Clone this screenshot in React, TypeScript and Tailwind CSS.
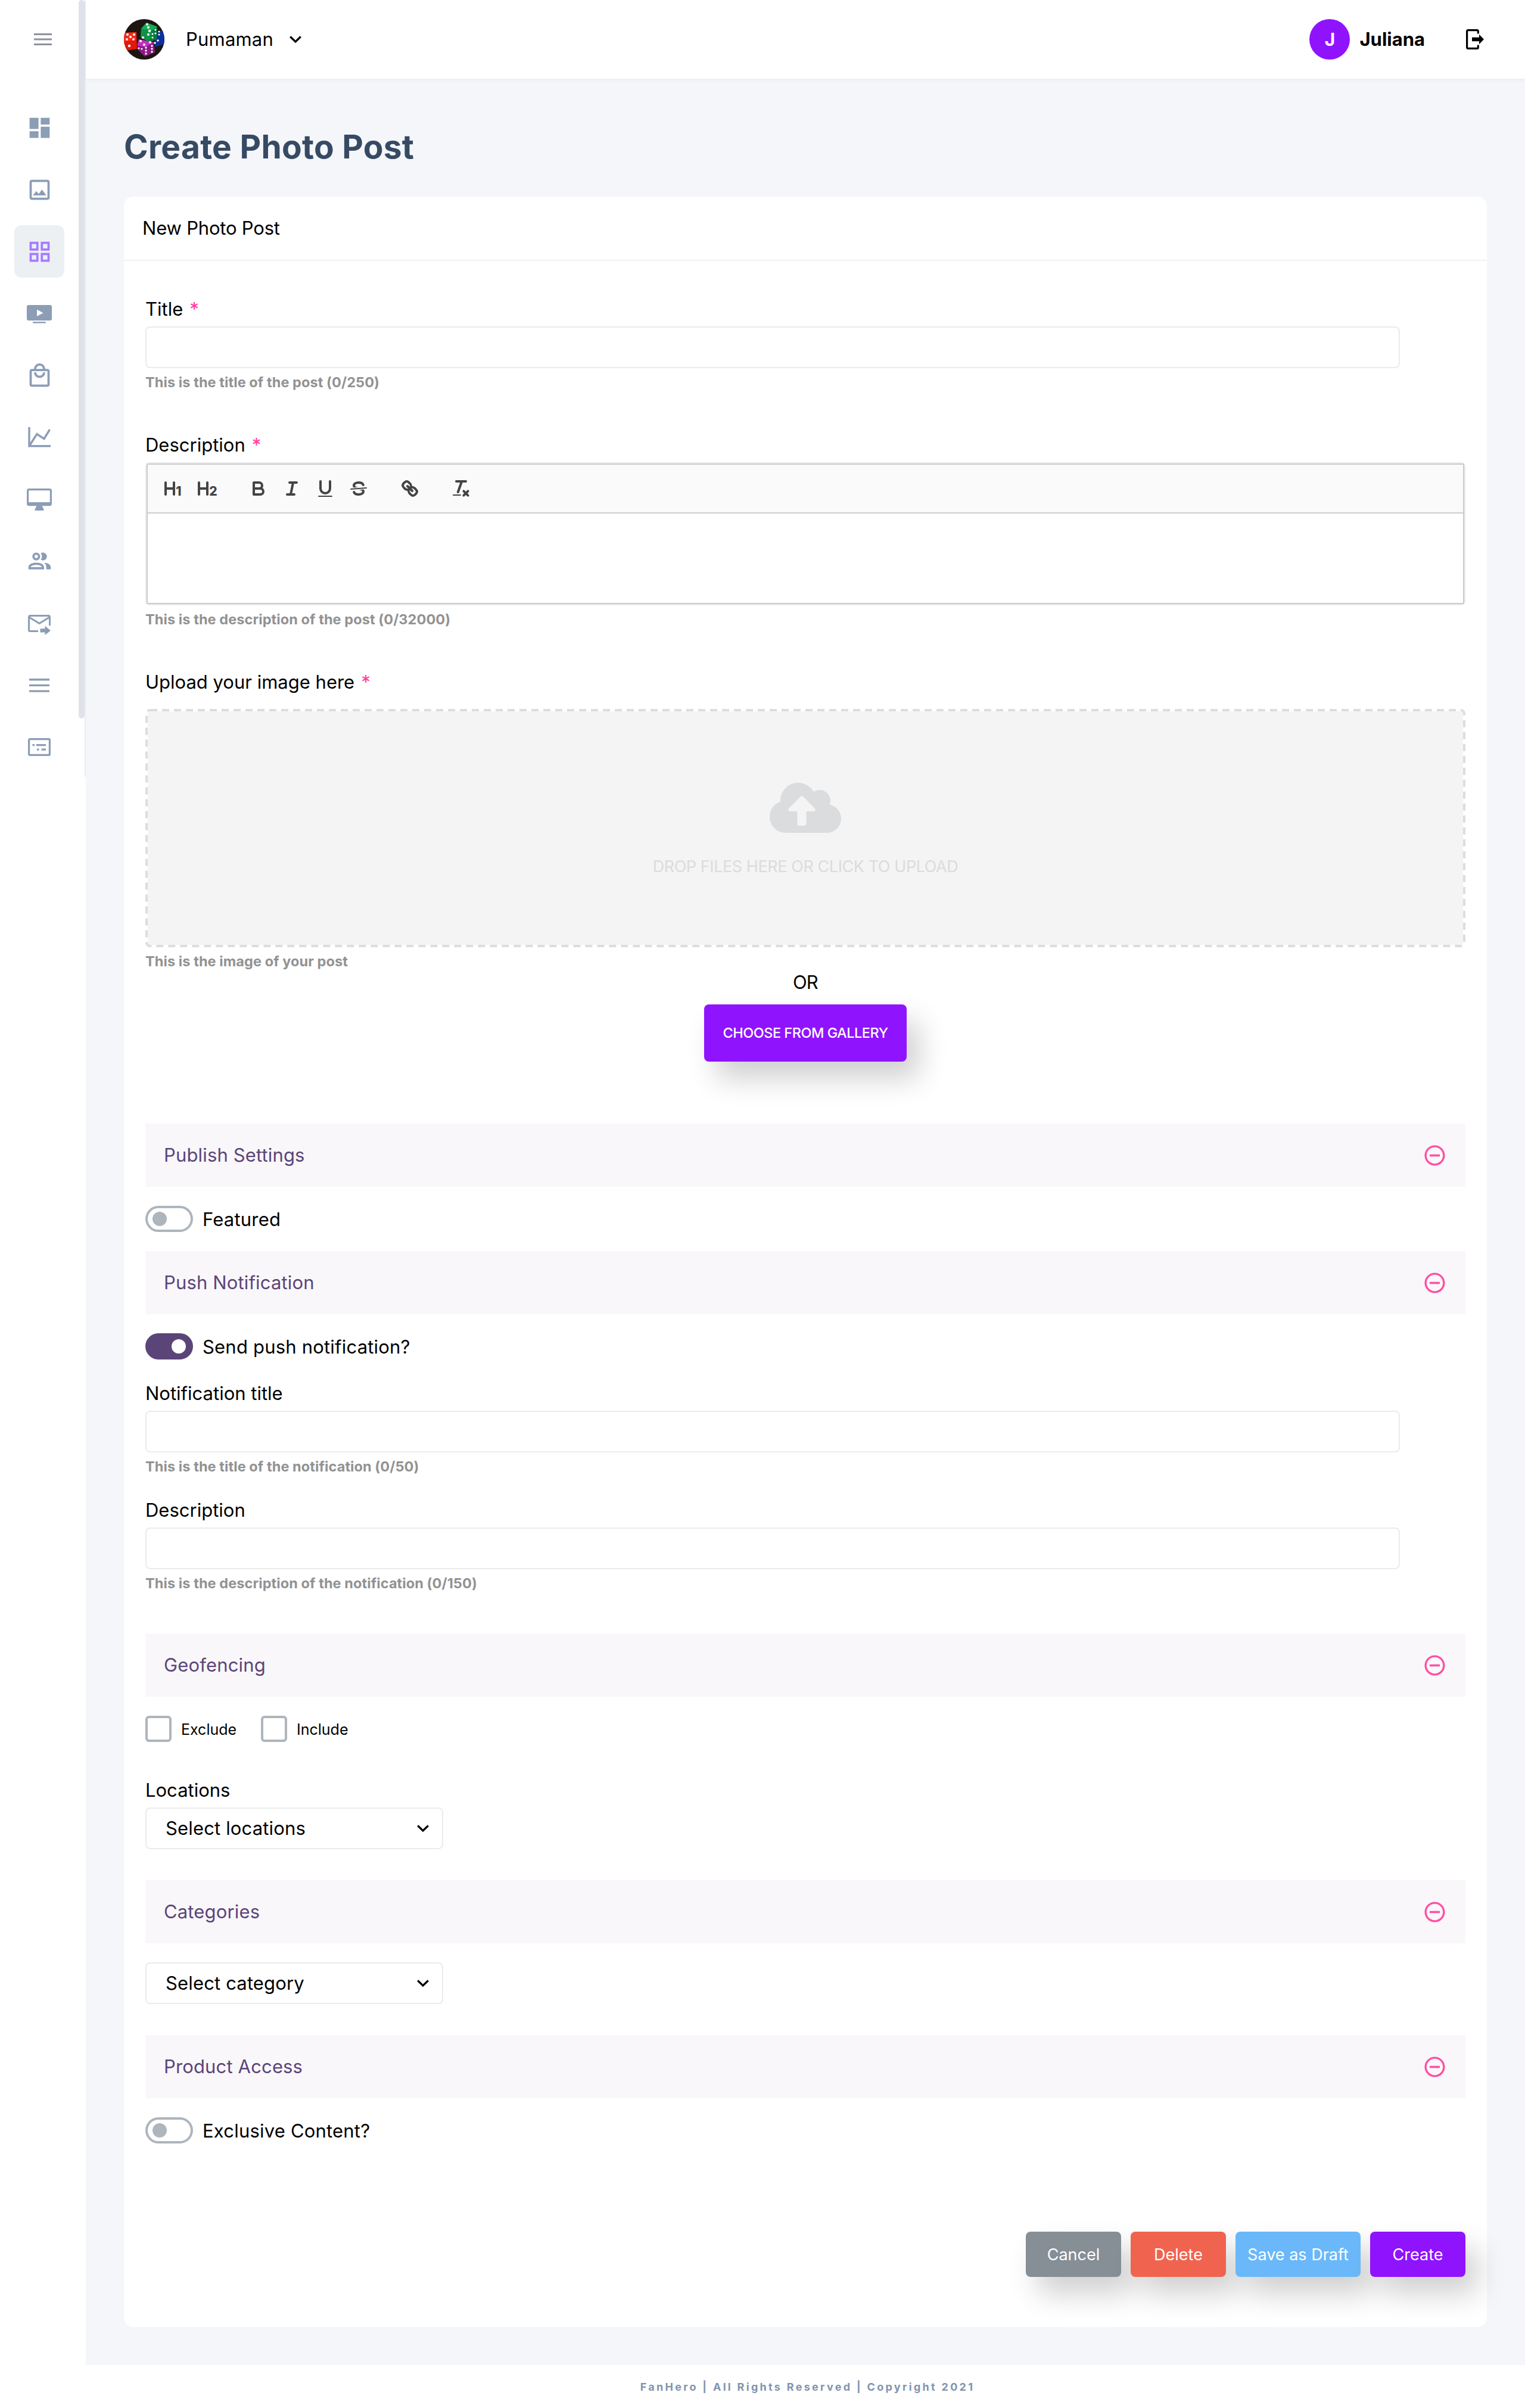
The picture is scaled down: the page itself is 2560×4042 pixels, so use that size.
import React, { useState } from "react";
import {
  MdDashboard,
  MdOutlineGridView,
  MdOutlineImage,
  MdOutlineLocalMall,
  MdRemoveCircleOutline,
} from "react-icons/md";
import { FaCloudUploadAlt } from "react-icons/fa";

const VideoIcon = () => (
  <svg
    width="42"
    height="32"
    viewBox="0 0 42 32"
    fill="currentColor"
    className="mt-[3px]"
  >
    <path d="M3 0h36a3 3 0 0 1 3 3v20a3 3 0 0 1-3 3H3a3 3 0 0 1-3-3V3a3 3 0 0 1 3-3Zm14 7.5v11.5l10.5-5.7Z" />
    <rect x="10" y="28" width="22" height="2.4" rx="1" />
  </svg>
);

const ChartIcon = () => (
  <svg
    width="38"
    height="34"
    viewBox="0 0 38 34"
    fill="none"
    stroke="currentColor"
    strokeWidth="3.4"
  >
    <path d="M2 0V31.8H38" />
    <path d="M2.5 31L15 11.5L27 19.5L36.5 4" />
  </svg>
);

const DesktopIcon = () => (
  <svg width="42" height="37" viewBox="0 0 42 37" fill="currentColor">
    <rect
      x="1.6"
      y="1.6"
      width="38.8"
      height="26"
      rx="2"
      fill="none"
      stroke="currentColor"
      strokeWidth="3.2"
    />
    <path d="M2 23H40V28.5H2ZM17 28H25L28.5 35V37H13.5V35Z" />
  </svg>
);

const PeopleIcon = () => (
  <svg width="45" height="45" viewBox="0 0 24 24" fill="currentColor">
    <path d="M13.07 10.41A5 5 0 0 0 13.07 4.59A3.39 3.39 0 0 1 15 4A3.5 3.5 0 0 1 15 11A3.39 3.39 0 0 1 13.07 10.41M5.5 7.5A3.5 3.5 0 1 1 9 11A3.5 3.5 0 0 1 5.5 7.5M7.5 7.5A1.5 1.5 0 1 0 9 6A1.5 1.5 0 0 0 7.5 7.5M16 17V19H2V17S2 13 9 13 16 17 16 17M14 17C13.86 16.22 12.67 15 9 15S4.07 16.31 4 17M15.95 13A5.32 5.32 0 0 1 18 17V19H22V17S22 13.37 15.94 13Z" />
  </svg>
);

const MailIcon = () => (
  <svg
    width="38"
    height="34"
    viewBox="0 0 38 34"
    fill="none"
    stroke="currentColor"
    strokeWidth="3"
    className="mt-[6px]"
  >
    <path d="M17 27.5H3.5a2 2 0 0 1-2-2V3.5a2 2 0 0 1 2-2h31a2 2 0 0 1 2 2V18" />
    <path d="M2 4L19 14.5L36 4" />
    <path
      d="M20.5 23.3H28.5V18.5L38 26.4L28.5 34V29.5H20.5Z"
      fill="currentColor"
      stroke="none"
    />
  </svg>
);

const MenuIcon = () => (
  <svg width="34" height="23" viewBox="0 0 34 23" fill="currentColor">
    <path d="M0 0H34V3.4H0ZM0 9.7H34V13.1H0ZM0 19.4H34V22.8H0Z" />
  </svg>
);

const ListIcon = () => (
  <svg width="38" height="30" viewBox="0 0 38 30" fill="currentColor">
    <rect
      x="1.6"
      y="1.6"
      width="34.8"
      height="26.8"
      rx="1.5"
      fill="none"
      stroke="currentColor"
      strokeWidth="3.2"
    />
    <path d="M7.5 10H11V13.2H7.5ZM14 10H30V13.2H14ZM15 17.5H18.5V20.7H15ZM22.5 17.5H30V20.7H22.5Z" />
  </svg>
);

const ChevronIcon = () => (
  <svg
    width="20"
    height="13"
    viewBox="0 0 20 13"
    fill="none"
    stroke="black"
    strokeWidth="3.2"
  >
    <path d="M1.2 1.5L10 10L18.8 1.5" />
  </svg>
);

const LogoutIcon = () => (
  <svg width="30" height="34" viewBox="0 0 30 34">
    <path
      d="M20.3 7.5V3.2a1.6 1.6 0 0 0-1.6-1.6H3.2a1.6 1.6 0 0 0-1.6 1.6V30.8a1.6 1.6 0 0 0 1.6 1.6H18.7a1.6 1.6 0 0 0 1.6-1.6V26.5"
      fill="none"
      stroke="black"
      strokeWidth="3.2"
    />
    <path d="M10 13.8H22V8.8L30 17L22 25.2V20.2H10Z" />
  </svg>
);

const DiceAvatar = () => (
  <svg
    width="68"
    height="68"
    viewBox="0 0 68 68"
    className="rounded-full bg-[#1d1610]"
  >
    <path d="M0 23L21 22L22 50L4 53L0 48Z" fill="#e3170a" />
    <path d="M0 23L21 22L20 35L0 38Z" fill="#f52a17" />
    <path d="M53 22L68 18V42L52 47Z" fill="#0d2f9e" />
    <path d="M38 6L56 13L55 34L42 39L28 31L29 16Z" fill="#0c7a3c" />
    <path d="M38 6L56 13L46 20L29 16Z" fill="#16ad58" />
    <path d="M29 16L46 20L43 38L28 31Z" fill="#0f9148" />
    <path d="M25 34L50 39L52 56L35 63L22 50Z" fill="#8a1a86" />
    <path d="M25 34L50 39L36 47L22 44Z" fill="#c32fbd" />
    <g fill="white">
      <circle cx="6" cy="26" r="2" />
      <circle cx="17" cy="26" r="2" />
      <circle cx="11" cy="30" r="2" />
      <circle cx="5" cy="34" r="2" />
      <circle cx="16" cy="34" r="2" />
      <circle cx="9" cy="45" r="2.2" />
      <circle cx="39" cy="9" r="2" />
      <circle cx="41" cy="14" r="2" />
      <circle cx="43" cy="20" r="2.2" />
      <circle cx="41" cy="26" r="2" />
      <circle cx="32" cy="31" r="2" />
      <circle cx="48" cy="25" r="1.6" />
      <circle cx="48" cy="31" r="1.6" />
      <circle cx="53" cy="18" r="1.6" />
      <circle cx="53" cy="24" r="1.6" />
      <circle cx="59" cy="21" r="1.6" />
      <circle cx="59" cy="26" r="1.6" />
      <circle cx="57" cy="36" r="1.8" />
      <circle cx="52" cy="40" r="1.8" />
      <circle cx="28" cy="37" r="2" />
      <circle cx="34" cy="43" r="2" />
      <circle cx="44" cy="39" r="2" />
      <circle cx="25" cy="49" r="1.6" />
      <circle cx="30" cy="50" r="1.6" />
      <circle cx="37" cy="48" r="1.7" />
      <circle cx="37" cy="53" r="1.7" />
      <circle cx="37" cy="58" r="1.7" />
      <circle cx="47" cy="45" r="1.7" />
      <circle cx="47" cy="50" r="1.7" />
      <circle cx="47" cy="55" r="1.7" />
    </g>
  </svg>
);

const navItems = [
  { name: "dashboard", icon: <MdDashboard size={45} /> },
  { name: "banners", icon: <MdOutlineImage size={45} /> },
  { name: "posts", icon: <MdOutlineGridView size={45} /> },
  { name: "videos", icon: <VideoIcon /> },
  { name: "store", icon: <MdOutlineLocalMall size={45} /> },
  { name: "reports", icon: <ChartIcon /> },
  { name: "app", icon: <DesktopIcon /> },
  { name: "users", icon: <PeopleIcon /> },
  { name: "messages", icon: <MailIcon /> },
  { name: "menu", icon: <MenuIcon /> },
  { name: "forms", icon: <ListIcon /> },
];

const Sidebar = () => (
  <aside className="flex w-36 shrink-0 items-start bg-white">
    <div className="w-[132px]">
      <div className="flex h-[132px] items-center justify-center pl-3">
        <svg width="30" height="20" viewBox="0 0 30 20" fill="#8f919d">
          <path d="M0 0H30V3H0ZM0 8.5H30V11.5H0ZM0 17H30V20H0Z" />
        </svg>
      </div>
      <nav className="flex flex-col items-center gap-4 pt-[38px]">
        {navItems.map((item) => (
          <a
            key={item.name}
            className={`flex h-[88px] w-[84px] items-center justify-center rounded-xl ${
              item.name === "posts"
                ? "bg-[#ecf0f3] text-[#a67bff]"
                : "text-[#8c9db6]"
            }`}
          >
            {item.icon}
          </a>
        ))}
      </nav>
    </div>
    <div className="h-[1304px] w-3 border-r-2 border-[#ebedf4]">
      <div className="h-[1206px] w-[10px] rounded-full bg-[#e0e2eb]" />
    </div>
  </aside>
);

const Header = () => (
  <header className="z-10 flex h-[132px] items-center justify-between bg-white pr-[69px] pl-16 shadow-[0_2px_6px_rgba(43,55,72,0.06)]">
    <div className="flex items-center">
      <DiceAvatar />
      <span className="mr-[27px] ml-9 tracking-[0.2px]">Pumaman</span>
      <ChevronIcon />
    </div>
    <div className="flex items-center font-bold">
      <div className="flex size-[68px] items-center justify-center rounded-full bg-[#9013fe] text-[30px] text-white">
        J
      </div>
      <span className="mr-[69px] ml-4">Juliana</span>
      <LogoutIcon />
    </div>
  </header>
);

const Label = ({
  children,
  required,
}: {
  children: React.ReactNode;
  required?: boolean;
}) => (
  <label className="mb-2 flex h-[42px] items-center">
    {children}
    {required && <span className="ml-[11px] text-[#ff3d9a]">*</span>}
  </label>
);

const Hint = ({ children }: { children: React.ReactNode }) => (
  <p className="mt-[10px] h-7 text-[23.5px] leading-7 font-bold tracking-[0.08px] text-[#929292]">
    {children}
  </p>
);

const Input = () => (
  <input
    type="text"
    className="block h-[70px] w-[2106px] rounded-lg border-2 border-[#ebebeb] px-8 outline-none"
  />
);

const Select = ({ placeholder }: { placeholder: string }) => (
  <button className="flex h-[70px] w-[500px] items-center justify-between rounded-lg border-2 border-[#ebebeb] pr-[22px] pl-8 tracking-[0.15px]">
    {placeholder}
    <ChevronIcon />
  </button>
);

const SectionBar = ({ title }: { title: string }) => (
  <div className="flex h-[106px] items-center justify-between bg-[#f9f7fa] pr-[31px] pl-[31px] tracking-[0.15px] text-[#5b4578]">
    {title}
    <MdRemoveCircleOutline size={41} className="text-[#ff4fa3]" />
  </div>
);

const Toggle = ({
  label,
  defaultOn = false,
}: {
  label: string;
  defaultOn?: boolean;
}) => {
  const [on, setOn] = useState(defaultOn);

  return (
    <div
      className="flex h-11 items-center gap-4 tracking-[0.2px]"
      onClick={() => setOn(!on)}
    >
      <div
        className={`flex h-11 w-20 items-center rounded-full border-4 px-2 ${
          on
            ? "justify-end border-[#5b4578] bg-[#5b4578]"
            : "justify-start border-[#adb5bd]"
        }`}
      >
        <div
          className={`size-6 rounded-full ${on ? "bg-white" : "bg-[#adb5bd]"}`}
        />
      </div>
      <span className="pt-0.5">{label}</span>
    </div>
  );
};

const Checkbox = ({ label }: { label: string }) => (
  <label className="flex w-[194px] items-center gap-4 text-[25px]">
    <span className="size-11 rounded-md border-4 border-[#adb5bd]" />
    <span className="pt-0.5">{label}</span>
  </label>
);

const ToolbarButton = ({ children }: { children: React.ReactNode }) => (
  <button className="flex h-12 w-14 items-center justify-center">
    <svg
      width="36"
      height="36"
      viewBox="0 0 18 18"
      fill="none"
      stroke="#444"
      strokeWidth="2"
      strokeLinecap="round"
      strokeLinejoin="round"
    >
      {children}
    </svg>
  </button>
);

const Heading = ({ level }: { level: string }) => (
  <>
    <path d="M2 4V14M9 4V14M2 9H9" />
    <text
      x="10.6"
      y="14.9"
      fill="#444"
      stroke="none"
      className="text-[10.5px] font-extrabold"
    >
      {level}
    </text>
  </>
);

const Editor = () => (
  <div className="h-60 rounded-lg border-2 border-[#ebebeb]">
    <div className="flex h-full flex-col border-2 border-[#ccc]">
      <div className="flex h-[82px] items-center gap-[30px] border-b-2 border-[#ccc] bg-[#fafafa] pl-4">
        <div className="flex">
          <ToolbarButton>
            <Heading level="1" />
          </ToolbarButton>
          <ToolbarButton>
            <Heading level="2" />
          </ToolbarButton>
        </div>
        <div className="flex">
          <ToolbarButton>
            <path d="M5,4H9.5A2.5,2.5,0,0,1,9.5,9H5Z" />
            <path d="M5,9h5.5A2.5,2.5,0,0,1,10.5,14H5Z" />
          </ToolbarButton>
          <ToolbarButton>
            <path d="M7,4H13M5,14H11M8,14L10,4" />
          </ToolbarButton>
          <ToolbarButton>
            <path d="M5,3V9a4,4,0,0,0,8,0V3" />
            <path d="M3.5,15.5H14.5" strokeWidth="1" />
          </ToolbarButton>
          <ToolbarButton>
            <path d="M12.9,6C12.5,4.8,11,4,9,4C6.8,4,5,5,5,6.5C5,8,6.5,8.7,9,9C11.5,9.3,13,10,13,11.5C13,13,11.2,14,9,14C7,14,5.5,13.2,5.1,12" />
            <path d="M2.5,9.5L15.5,8.5" stroke="#fafafa" strokeWidth="2.2" />
            <path d="M2.5,9.5L15.5,8.5" strokeWidth="1" />
          </ToolbarButton>
        </div>
        <ToolbarButton>
          <path d="M7,7L11,11" />
          <path d="M8.9,4.577a3.476,3.476,0,0,1,.36,4.679A3.476,3.476,0,0,1,4.577,8.9C3.185,7.5,2.035,6.4,4.217,4.217S7.5,3.185,8.9,4.577Z" />
          <path d="M13.423,9.1a3.476,3.476,0,0,0-4.679-.36,3.476,3.476,0,0,0,.36,4.679c1.392,1.392,2.5,2.542,4.679.36S14.815,10.5,13.423,9.1Z" />
        </ToolbarButton>
        <ToolbarButton>
          <path d="M5,3H13M6.4,12L9.6,3M11.2,11.2L14.8,14.8M14.8,11.2L11.2,14.8" />
          <path d="M2.5,14.5H8.5" strokeWidth="1" />
        </ToolbarButton>
      </div>
      <div className="grow" />
    </div>
  </div>
);

const Dropzone = () => (
  <div className="relative mt-6 flex h-[400px] flex-col items-center rounded-lg border-4 border-transparent bg-[#f4f4f4] bg-clip-padding pt-[114px] text-[#dadcde]">
    {/* dashed outline, the dashes are longer than border-dashed gives */}
    <svg className="absolute -top-1 -left-1" width="2216" height="400">
      <rect
        x="2"
        y="2"
        width="2212"
        height="396"
        rx="6"
        fill="none"
        stroke="#dddddd"
        strokeWidth="4"
        strokeDasharray="12 8"
      />
    </svg>
    <FaCloudUploadAlt className="h-24 w-[120px]" />
    <span className="mt-[31px] text-[27px] leading-10 tracking-[-0.43px]">
      DROP FILES HERE OR CLICK TO UPLOAD
    </span>
  </div>
);

const buttonShadow = "shadow-[20px_28px_48px_rgba(0,0,0,0.19)]";

const actions = [
  { label: "Cancel", style: "w-40 bg-[#868e96]" },
  { label: "Delete", style: "w-40 bg-[#f0644f]" },
  { label: "Save as Draft", style: "w-[210px] bg-[#6ab8f9]" },
  { label: "Create", style: "w-40 bg-[#9013fe]" },
];

const PhotoPostForm = () => (
  <form className="flex flex-col px-9 pt-[60px] pb-[84px]">
    <Label required>Title</Label>
    <Input />
    <Hint>This is the title of the post (0/250)</Hint>

    <div className="mt-[70px]">
      <Label required>Description</Label>
      <Editor />
      <Hint>This is the description of the post (0/32000)</Hint>
    </div>

    <div className="mt-[70px]">
      <Label required>Upload your image here</Label>
      <Dropzone />
      <Hint>This is the image of your post</Hint>
    </div>

    <div className="flex flex-col items-center">
      <span className="mb-4 leading-[42px] tracking-[-0.8px]">OR</span>
      <button
        type="button"
        className={`h-24 w-[340px] rounded-lg bg-[#9013fe] text-[23.5px] font-medium tracking-[-0.5px] text-white ${buttonShadow}`}
      >
        CHOOSE FROM GALLERY
      </button>
    </div>

    <div className="mt-[104px] flex flex-col gap-8">
      <SectionBar title="Publish Settings" />
      <Toggle label="Featured" />
      <SectionBar title="Push Notification" />
      <Toggle label="Send push notification?" defaultOn />
    </div>

    <div className="mt-9">
      <Label>Notification title</Label>
      <Input />
      <Hint>This is the title of the notification (0/50)</Hint>
    </div>
    <div className="mt-[38px] mb-[70px]">
      <Label>Description</Label>
      <Input />
      <Hint>This is the description of the notification (0/150)</Hint>
    </div>

    <SectionBar title="Geofencing" />
    <div className="mt-8 mb-[60px] flex">
      <Checkbox label="Exclude" />
      <Checkbox label="Include" />
    </div>
    <Label>Locations</Label>
    <Select placeholder="Select locations" />

    <div className="mt-[52px] mb-[52px] flex flex-col gap-8">
      <SectionBar title="Categories" />
      <Select placeholder="Select category" />
    </div>

    <div className="flex flex-col gap-8">
      <SectionBar title="Product Access" />
      <Toggle label="Exclusive Content?" />
    </div>

    <div className="mt-[148px] flex justify-end gap-4">
      {actions.map((action) => (
        <button
          key={action.label}
          type="button"
          className={`h-[76px] rounded-lg pt-0.5 text-[27px] text-white ${buttonShadow} ${action.style}`}
        >
          {action.label}
        </button>
      ))}
    </div>
  </form>
);

export default function App() {
  return (
    <div className="flex min-h-[4042px] w-[2560px] bg-white font-[Inter,sans-serif] text-[31px] leading-[42px] text-black">
      <Sidebar />
      <div className="flex grow flex-col">
        <Header />
        <main className="bg-[#f5f6fa] pt-20 pr-16 pb-16 pl-16">
          <h1 className="mb-[50px] text-[55px] leading-[68px] font-bold tracking-[0.3px] text-[#364a63]">
            Create Photo Post
          </h1>
          <div className="rounded-2xl bg-white">
            <div className="flex h-[108px] items-center border-b-2 border-[#f0f1f2] pl-[31px] tracking-[-0.2px]">
              New Photo Post
            </div>
            <PhotoPostForm />
          </div>
        </main>
        <footer className="flex h-[72px] items-center justify-center pt-0.5 pl-[7px] text-[18px] font-bold tracking-[3.3px] text-[#8094ae]">
          FanHero | All Rights Reserved | Copyright 2021
        </footer>
      </div>
    </div>
  );
}
